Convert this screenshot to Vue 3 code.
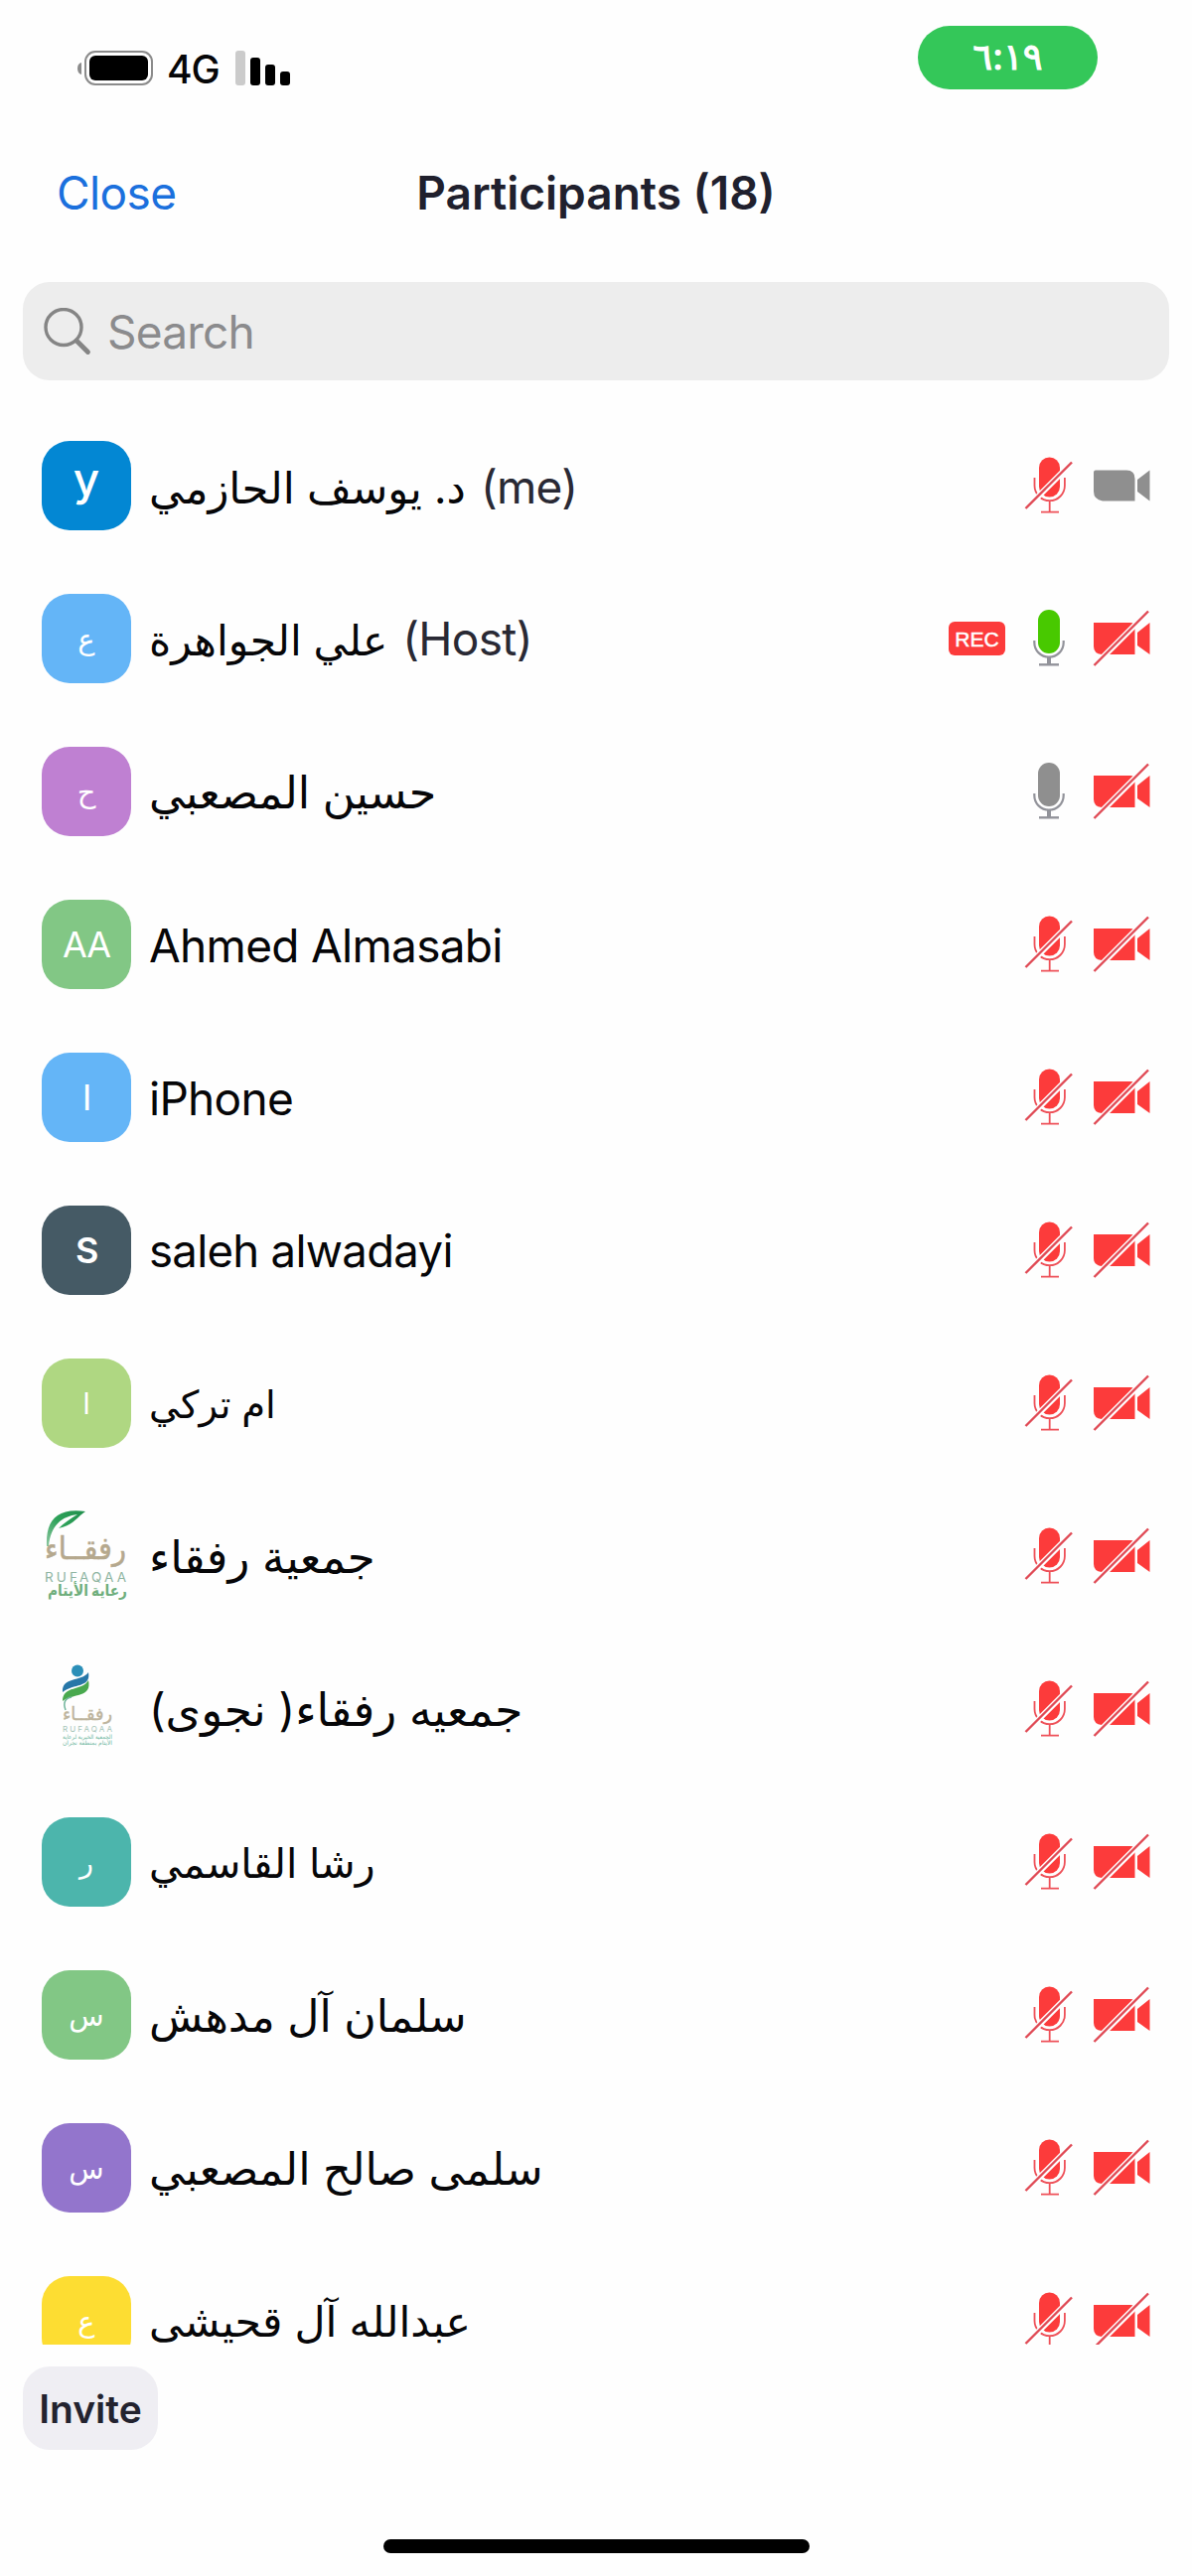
<template>
  <div class="screen">
    <header class="status-bar">
      <div class="status-left">
        <svg class="battery" width="78" height="38" viewBox="0 0 78 38">
          <path d="M4 13 Q0 14 0 19 Q0 24 4 25 Z" fill="#8b8b8b" />
          <rect x="8" y="2" width="67" height="33" rx="10" fill="none" stroke="#8b8b8b" stroke-width="2" />
          <rect x="12" y="6" width="59" height="25" rx="6" fill="#000" />
        </svg>
        <span class="network">4G</span>
        <svg class="signal" width="56" height="36" viewBox="0 0 56 36">
          <rect x="0" y="0" width="10" height="35" rx="3" fill="#cbcbcb" />
          <rect x="15" y="7" width="10" height="28" rx="3" />
          <rect x="30" y="14" width="10" height="21" rx="3" />
          <rect x="45" y="21" width="10" height="14" rx="3" />
        </svg>
      </div>
      <div class="clock">٦:١٩</div>
    </header>

    <nav class="nav">
      <a class="close">Close</a>
      <h1>Participants (18)</h1>
    </nav>

    <div class="search">
      <svg width="48" height="48" viewBox="0 0 48 48" fill="none" stroke="#858585">
        <circle cx="20" cy="19.500" r="18" stroke-width="3.400" />
        <path d="M33 33 L44.500 44.500" stroke-width="4.800" stroke-linecap="round" />
      </svg>
      <span>Search</span>
    </div>

    <ul class="list">
      <li v-for="(p, i) in participants" :key="i" class="row">
        <svg v-if="p.logo === 'leaf'" class="logo" width="90" height="90" viewBox="0 0 90 90">
          <defs>
            <linearGradient id="leaf" x1="0" y1="1" x2="1" y2="0">
              <stop offset="0" stop-color="#8cc6a0" />
              <stop offset="0.5" stop-color="#2fa25a" />
              <stop offset="1" stop-color="#1f8f4c" />
            </linearGradient>
          </defs>
          <path d="M5 35 C4 10 14 -4 44 0 C36 5 32 14 17 17 C22 12 29 7 36 3 C20 5 9 14 7 35 Z" fill="url(#leaf)" />
          <text x="44" y="48" font-size="31" text-anchor="middle" fill="#b5a88d" stroke="#b5a88d" stroke-width="0.600" textLength="82" lengthAdjust="spacingAndGlyphs">رفقــاء</text>
          <text x="3" y="71" font-size="13.5" fill="#8fb5a2" textLength="82">RUFAQAA</text>
          <text x="46" y="85" font-size="16" font-weight="bold" text-anchor="middle" fill="#6fae7c" textLength="80" lengthAdjust="spacingAndGlyphs">رعاية الأيتام</text>
        </svg>
        <svg v-else-if="p.logo === 'figure'" class="logo" width="90" height="90" viewBox="0 0 90 90">
          <circle cx="36" cy="6.500" r="6" fill="#2b8fb8" />
          <path d="M21 28 C20 12 40 18 47 8 C50 24 32 19 21 28 Z" fill="#2777a8" />
          <path d="M21 37 C21 21 41 27 47 16 C51 34 31 29 21 37 Z" fill="#49a94f" />
          <path d="M24 46 C21 38 24 34 30 33" fill="none" stroke="#6fb49a" stroke-width="1.500" />
          <text x="46" y="56" font-size="18" text-anchor="middle" fill="#bdb49d" stroke="#bdb49d" stroke-width="0.400" textLength="50" lengthAdjust="spacingAndGlyphs">رفقــاء</text>
          <text x="21" y="68" font-size="8" fill="#a5c4b8" textLength="50">RUFAQAA</text>
          <text x="46" y="75" font-size="6" text-anchor="middle" fill="#6fb7a0" textLength="50" lengthAdjust="spacingAndGlyphs">الجمعية الخيرية لرعاية</text>
          <text x="46" y="81" font-size="6" text-anchor="middle" fill="#6fb7a0" textLength="50" lengthAdjust="spacingAndGlyphs">الأيتام بمنطقة نجران</text>
        </svg>
        <div v-else class="avatar" :class="p.kind" :style="{ backgroundColor: p.color }">
          <span>{{ p.initial }}</span>
        </div>

        <div class="name">
          <bdi :class="{ arabic: !p.latin }" :style="{ fontSize: p.size + 'px' }">{{ p.name }}</bdi>
          <span v-if="p.role" class="role">({{ p.role }})</span>
        </div>

        <span v-if="p.rec" class="rec">REC</span>

        <svg v-if="p.mic === 'off'" class="mic" width="60" height="60" viewBox="0 0 60 60">
          <rect x="20" y="1.500" width="21" height="40" rx="10.500" fill="#fc3b3b" />
          <path d="M15.500 22 V30 A15.200 15.200 0 0 0 45.900 30 V22 M30.700 45 V56.500 M22 56.700 H40" fill="none" stroke="#ee5058" stroke-width="1.800" />
          <path d="M8 52 L52 8" stroke="#fff" stroke-width="6" />
          <path d="M6.500 53 L53 6.500" stroke="#e04a55" stroke-width="2.400" />
        </svg>
        <svg v-else class="mic" width="60" height="60" viewBox="0 0 60 60">
          <rect x="19" y="1" width="22" height="44" rx="11" :fill="p.mic === 'live' ? '#48c900' : '#8f8f8f'" />
          <path d="M15.300 32 V34 A14.700 14.700 0 0 0 44.700 34 V32" fill="none" stroke="#92939a" stroke-width="2.200" />
          <path d="M30 49 V56" stroke="#92939a" stroke-width="4" />
          <path d="M20 56.300 H40" stroke="#92939a" stroke-width="2.400" />
        </svg>

        <svg class="cam" width="68" height="60" viewBox="0 0 68 60">
          <g v-if="p.cam" fill="#8f8f8f">
            <path d="M7 14.500 H38 Q46.500 14.500 46.500 23 V45.500 H14 Q5 44 5 36 V16.500 Q5 14.500 7 14.500 Z" />
            <path d="M49 24 L61.500 14.500 V45.500 L49 36 Z" />
          </g>
          <g v-else fill="#fc3b3b">
            <path d="M5 14 H42 Q46.500 14 46.500 19 V46 H13 Q5 45 5 38 Z" />
            <path d="M49 24 L61.500 14 V46 L49 37 Z" />
            <path d="M6 57 L60.500 2.500" stroke="#fff" stroke-width="6" />
            <path d="M5.500 57 L60 2.500" stroke="#e04a55" stroke-width="2.400" />
          </g>
        </svg>
      </li>
    </ul>

    <footer class="footer">
      <button class="invite">Invite</button>
      <div class="home-indicator"></div>
    </footer>
  </div>
</template>

<script setup>
const participants = [
  { name: 'د. يوسف الحازمي', role: 'me', initial: 'y', kind: 'lower', color: '#0387d3', mic: 'off', cam: true, size: 43.4 },
  { name: 'علي الجواهرة', role: 'Host', initial: 'ع', kind: 'ar', color: '#64b5f7', mic: 'live', rec: true, size: 42.4 },
  { name: 'حسين المصعبي', initial: 'ح', kind: 'ar', color: '#bf80d2', mic: 'on', size: 44.5 },
  { name: 'Ahmed Almasabi', latin: true, initial: 'AA', kind: 'upper', color: '#82c785', mic: 'off', size: 46 },
  { name: 'iPhone', latin: true, initial: 'I', kind: 'upper', color: '#64b5f7', mic: 'off', size: 46 },
  { name: 'saleh alwadayi', latin: true, initial: 'S', kind: 'upper bold', color: '#455a65', mic: 'off', size: 45.5 },
  { name: 'ام تركي', initial: 'ا', kind: 'ar', color: '#afd782', mic: 'off', size: 38.5 },
  { name: 'جمعية رفقاء', logo: 'leaf', mic: 'off', size: 45.2 },
  { name: 'جمعيه رفقاء( نجوى)', logo: 'figure', mic: 'off', size: 45.5 },
  { name: 'رشا القاسمي', initial: 'ر', kind: 'ar', color: '#4cb5ac', mic: 'off', size: 41 },
  { name: 'سلمان آل مدهش', initial: 'س', kind: 'ar', color: '#82c785', mic: 'off', size: 44.3 },
  { name: 'سلمى صالح المصعبي', initial: 'س', kind: 'ar', color: '#9375cc', mic: 'off', size: 44.6 },
  { name: 'عبدالله آل قحيشى', initial: 'ع', kind: 'ar', color: '#fddd32', mic: 'off', size: 42.7 }
]
</script>

<style>
body {
  margin: 0;
  background: #fefefe;
}
</style>

<style scoped>
.screen {
  width: 1200px;
  height: 2594px;
  box-sizing: border-box;
  display: flex;
  flex-direction: column;
  overflow: hidden;
  background: #fefefe;
  color: #060608;
  font-family: Inter, 'DejaVu Sans', sans-serif;
}

.status-bar {
  height: 140px;
  box-sizing: border-box;
  padding: 26px 95px 0 78px;
  display: flex;
  justify-content: space-between;
  align-items: flex-start;
}

.status-left {
  display: flex;
  align-items: center;
  padding-top: 23px;
  height: 40px;
}

.network {
  width: 69px;
  margin-left: 12px;
  font-size: 39px;
  font-weight: 500;
  letter-spacing: -1px;
}

.clock {
  width: 181px;
  height: 64px;
  border-radius: 32px;
  background: #34c759;
  color: #fff;
  font-size: 37px;
  line-height: 62px;
  text-align: center;
  direction: ltr;
  unicode-bidi: bidi-override;
  -webkit-text-stroke: 1px #fff;
}

.nav {
  height: 144px;
  display: grid;
  grid-template-columns: 1fr auto 1fr;
  align-items: start;
  padding: 26px 57px 0;
  box-sizing: border-box;
  line-height: 56px;
}

.close {
  color: #1b70dd;
  font-size: 46px;
  letter-spacing: -0.6px;
}

h1 {
  margin: 0;
  color: #20202d;
  font-size: 46px;
  font-weight: 600;
}

.search {
  height: 99px;
  flex: none;
  margin: 0 23px;
  padding-left: 21px;
  display: flex;
  align-items: center;
  gap: 16px;
  border-radius: 27px;
  background: #ededed;
  color: #8b8b8d;
  font-size: 46px;
  letter-spacing: -0.8px;
}

.list {
  list-style: none;
  margin: 29px 0 0;
  padding: 0;
  height: 1949px;
  flex: none;
  overflow: hidden;
}

.row {
  height: 154px;
  box-sizing: border-box;
  padding: 0 36px 0 42px;
  display: flex;
  align-items: center;
}

.avatar {
  width: 90px;
  height: 90px;
  border-radius: 28px;
  display: flex;
  justify-content: center;
  align-items: center;
  color: #fff;
  line-height: 1;
}

.upper {
  font-size: 36px;
  letter-spacing: -1.2px;
}

.bold {
  font-weight: 600;
}

.lower {
  font-size: 46px;
  font-weight: 500;
  padding-bottom: 14px;
  box-sizing: border-box;
}

.ar {
  font-size: 29px;
}

.logo {
  flex: none;
  overflow: visible;
}

.name {
  flex: 1;
  display: flex;
  align-items: baseline;
  gap: 15px;
  padding: 2px 0 0 18px;
  font-size: 46px;
  line-height: 64px;
  letter-spacing: -0.7px;
  white-space: nowrap;
}

.arabic {
  letter-spacing: 0;
}

.role {
  color: #292934;
  font-size: 46px;
}

.rec {
  width: 57px;
  height: 34px;
  margin-right: 14px;
  border-radius: 6px;
  background: #fc3b3b;
  color: #fff;
  font: 21px/35px 'Liberation Sans', sans-serif;
  text-align: center;
  -webkit-text-stroke: 0.5px #fff;
}

.cam {
  margin-left: 10px;
}

.footer {
  flex: 1;
  display: flex;
  flex-direction: column;
  justify-content: space-between;
  align-items: center;
  padding: 22px 23px 23px;
}

.invite {
  align-self: flex-start;
  width: 136px;
  height: 84px;
  padding: 0;
  border: 0;
  border-radius: 27px;
  background: #efeef3;
  color: #23232f;
  font: 600 39px Inter, sans-serif;
}

.home-indicator {
  width: 429px;
  height: 14px;
  border-radius: 7px;
  background: #000;
}
</style>
